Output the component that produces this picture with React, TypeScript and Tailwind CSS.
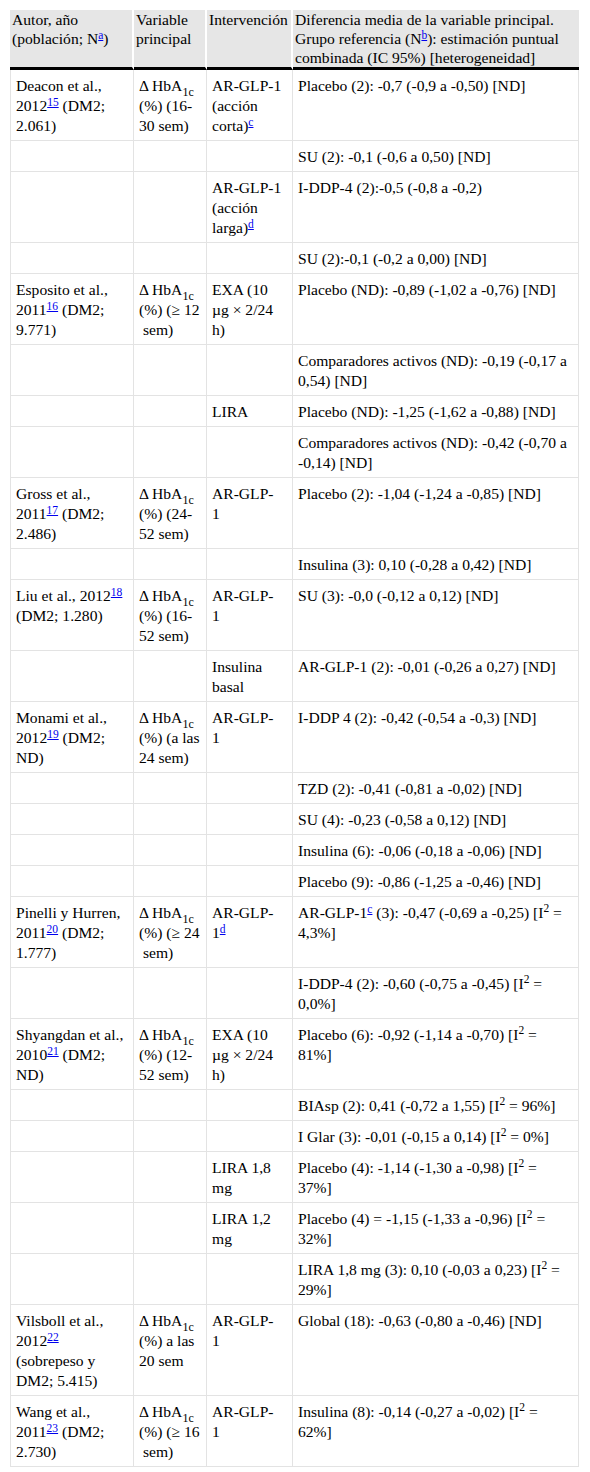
import React from "react";

type Cell = React.ReactNode;

const Ref = ({ n }: { n: string }) => (
  <sup className="relative top-[-0.45em] align-baseline text-[11.5px] leading-none">
    <a href="#" className="text-[#0000ee] underline">
      {n}
    </a>
  </sup>
);

const Sq = () => (
  <sup className="relative top-[-0.5em] align-baseline text-[11.5px] leading-none">2</sup>
);

const Hba = ({ rest }: { rest: string }) => (
  <>
    Δ HbA
    <sub className="relative top-[0.4em] align-baseline text-[12px] leading-none">1c</sub>{" "}
    {rest}
  </>
);

const rows: Cell[][] = [
  [
    <>Deacon et al., 2012<Ref n="15" /> (DM2; 2.061)</>,
    <Hba rest="(%) (16-30 sem)" />,
    <>AR-GLP-1 (acción corta)<Ref n="c" /></>,
    "Placebo (2): -0,7 (-0,9 a -0,50) [ND]",
  ],
  ["", "", "", "SU (2): -0,1 (-0,6 a 0,50) [ND]"],
  ["", "", <>AR-GLP-1 (acción larga)<Ref n="d" /></>, "I-DDP-4 (2):-0,5 (-0,8 a -0,2)"],
  ["", "", "", "SU (2):-0,1 (-0,2 a 0,00) [ND]"],
  [
    <>Esposito et al., 2011<Ref n="16" /> (DM2; 9.771)</>,
    <Hba rest={"(%) (≥ 12\u200b\u00a0sem)"} />,
    "EXA (10 µg × 2/24 h)",
    "Placebo (ND): -0,89 (-1,02 a -0,76) [ND]",
  ],
  ["", "", "", "Comparadores activos (ND): -0,19 (-0,17 a 0,54) [ND]"],
  ["", "", "LIRA", "Placebo (ND): -1,25 (-1,62 a -0,88) [ND]"],
  ["", "", "", "Comparadores activos (ND): -0,42 (-0,70 a -0,14) [ND]"],
  [
    <>Gross et al., 2011<Ref n="17" /> (DM2; 2.486)</>,
    <Hba rest="(%) (24-52 sem)" />,
    <>AR-GLP-<br />1</>,
    "Placebo (2): -1,04 (-1,24 a -0,85) [ND]",
  ],
  ["", "", "", "Insulina (3): 0,10 (-0,28 a 0,42) [ND]"],
  [
    <>Liu et al., 2012<Ref n="18" /> (DM2; 1.280)</>,
    <Hba rest="(%) (16-52 sem)" />,
    <>AR-GLP-<br />1</>,
    "SU (3): -0,0 (-0,12 a 0,12) [ND]",
  ],
  ["", "", "Insulina basal", "AR-GLP-1 (2): -0,01 (-0,26 a 0,27) [ND]"],
  [
    <>Monami et al., 2012<Ref n="19" /> (DM2; ND)</>,
    <Hba rest="(%) (a las 24 sem)" />,
    <>AR-GLP-<br />1</>,
    "I-DDP 4 (2): -0,42 (-0,54 a -0,3) [ND]",
  ],
  ["", "", "", "TZD (2): -0,41 (-0,81 a -0,02) [ND]"],
  ["", "", "", "SU (4): -0,23 (-0,58 a 0,12) [ND]"],
  ["", "", "", "Insulina (6): -0,06 (-0,18 a -0,06) [ND]"],
  ["", "", "", "Placebo (9): -0,86 (-1,25 a -0,46) [ND]"],
  [
    <>Pinelli y Hurren, 2011<Ref n="20" /> (DM2; 1.777)</>,
    <Hba rest={"(%) (≥ 24\u200b\u00a0sem)"} />,
    <>AR-GLP-<br />1<Ref n="d" /></>,
    <>AR-GLP-1<Ref n="c" /> (3): -0,47 (-0,69 a -0,25) [I<Sq /> = 4,3%]</>,
  ],
  ["", "", "", <>I-DDP-4 (2): -0,60 (-0,75 a -0,45) [I<Sq /> = 0,0%]</>],
  [
    <>Shyangdan et al., 2010<Ref n="21" /> (DM2; ND)</>,
    <Hba rest="(%) (12-52 sem)" />,
    "EXA (10 µg × 2/24 h)",
    <>Placebo (6): -0,92 (-1,14 a -0,70) [I<Sq /> = 81%]</>,
  ],
  ["", "", "", <>BIAsp (2): 0,41 (-0,72 a 1,55) [I<Sq /> = 96%]</>],
  ["", "", "", <>I Glar (3): -0,01 (-0,15 a 0,14) [I<Sq /> = 0%]</>],
  ["", "", "LIRA 1,8 mg", <>Placebo (4): -1,14 (-1,30 a -0,98) [I<Sq /> = 37%]</>],
  ["", "", "LIRA 1,2 mg", <>Placebo (4) = -1,15 (-1,33 a -0,96) [I<Sq /> = 32%]</>],
  ["", "", "", <>LIRA 1,8 mg (3): 0,10 (-0,03 a 0,23) [I<Sq /> = 29%]</>],
  [
    <>Vilsboll et al., 2012<Ref n="22" /> (sobrepeso y DM2; 5.415)</>,
    <Hba rest="(%) a las 20 sem" />,
    <>AR-GLP-<br />1</>,
    "Global (18): -0,63 (-0,80 a -0,46) [ND]",
  ],
  [
    <>Wang et al., 2011<Ref n="23" /> (DM2; 2.730)</>,
    <Hba rest={"(%) (≥ 16\u200b\u00a0sem)"} />,
    <>AR-GLP-<br />1</>,
    <>Insulina (8): -0,14 (-0,27 a -0,02) [I<Sq /> = 62%]</>,
  ],
];

const widths = ["w-[124px]", "w-[73px]", "w-[86px]", "w-[286px]"];

export default function App() {
  return (
    <div className="bg-white min-h-[1472px] pt-[10px] pl-[10px] font-['Liberation_Serif','Times_New_Roman',serif] text-[15.6px] leading-[20px] text-black">
      <table className="table-fixed border-separate border-spacing-0 w-[569px]">
        <colgroup>
          {widths.map((w) => (
            <col key={w} className={w} />
          ))}
        </colgroup>
        <thead>
          <tr className="bg-[#e6e6e6] align-top text-left">
            <th className="font-normal h-[58px] pl-[2px] pr-0 leading-[19px] border-b-[3px] border-b-black border-r-2 border-r-white">
              Autor, año (población; N<Ref n="a" />)
            </th>
            <th className="font-normal pl-[2px] pr-0 leading-[19px] border-b-[3px] border-b-black border-r-2 border-r-white">
              Variable principal
            </th>
            <th className="font-normal pl-[2px] pr-0 leading-[19px] border-b-[3px] border-b-black border-r-2 border-r-white">
              Intervención
            </th>
            <th className="font-normal pl-[2px] pr-0 leading-[19px] border-b-[3px] border-b-black">
              Diferencia media de la variable principal. Grupo referencia (N
              <Ref n="b" />): estimación puntual combinada (IC 95%) [heterogeneidad]
            </th>
          </tr>
        </thead>
        <tbody>
          {rows.map((r, i) => (
            <tr key={i} className="align-top">
              {r.map((c, j) => (
                <td
                  key={j}
                  className={
                    "pl-[5px] pt-[6px] pb-[4px] border-b border-r border-[#e3e3e3]" +
                    (j === 0 ? " border-l" : "") +
                    (j === 3 ? " pr-[6px]" : " pr-[5px]")
                  }
                >
                  {c}
                </td>
              ))}
            </tr>
          ))}
        </tbody>
      </table>
    </div>
  );
}
